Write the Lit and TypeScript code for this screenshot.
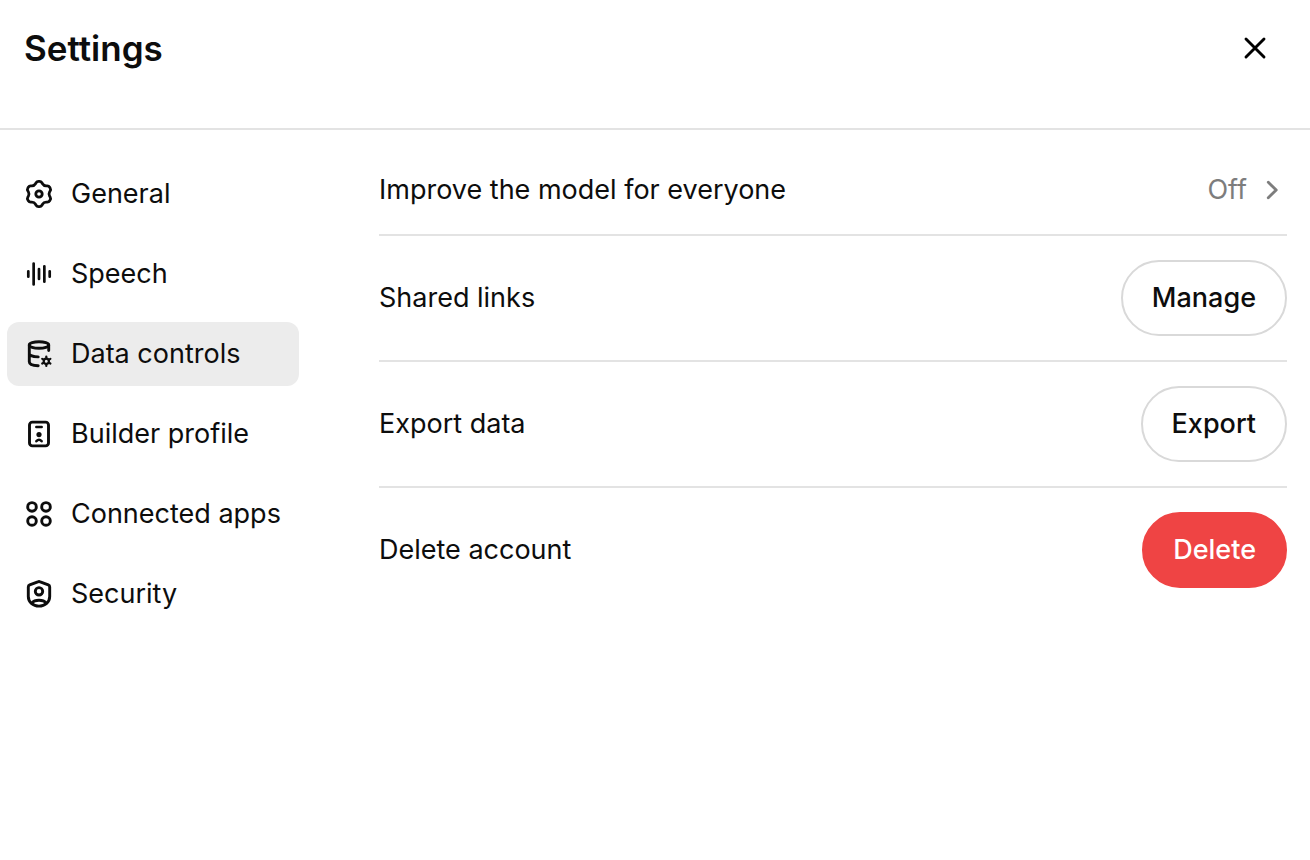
import { LitElement, html, css, svg, type TemplateResult } from "lit";
import { customElement, property, state } from "lit/decorators.js";
import { classMap } from "lit/directives/class-map.js";

// Icons are drawn around the origin of a 32 x 32 view box.
const icons: Record<string, TemplateResult> = {
  general: svg`
    <g transform="scale(1.4) translate(-12 -12)" stroke-width="2">
      <path d="M11.6439 3C10.9352 3 10.2794 3.37508 9.92002 3.98596L9.49644 4.70605C8.96184 5.61487 7.98938 6.17632 6.93501 6.18489L6.09967 6.19168C5.39096 6.19744 4.73823 6.57783 4.38386 7.19161L4.02776 7.80841C3.67339 8.42219 3.67032 9.17767 4.01969 9.7943L4.43151 10.5212C4.95127 11.4386 4.95127 12.5615 4.43151 13.4788L4.01969 14.2057C3.67032 14.8224 3.67339 15.5778 4.02776 16.1916L4.38386 16.8084C4.73823 17.4222 5.39096 17.8026 6.09966 17.8083L6.93502 17.8151C7.98939 17.8237 8.96185 18.3851 9.49645 19.294L9.92002 20.014C10.2794 20.6249 10.9352 21 11.6439 21H12.3561C13.0648 21 13.7206 20.6249 14.08 20.014L14.5035 19.294C15.0381 18.3851 16.0106 17.8237 17.065 17.8151L17.9004 17.8083C18.6091 17.8026 19.2618 17.4222 19.6162 16.8084L19.9723 16.1916C20.3267 15.5778 20.3298 14.8224 19.9804 14.2057L19.5686 13.4788C19.0488 12.5615 19.0488 11.4386 19.5686 10.5212L19.9804 9.7943C20.3298 9.17767 20.3267 8.42219 19.9723 7.80841L19.6162 7.19161C19.2618 6.57783 18.6091 6.19744 17.9004 6.19168L17.065 6.18489C16.0106 6.17632 15.0382 5.61487 14.5036 4.70605L14.08 3.98596C13.7206 3.37508 13.0648 3 12.3561 3H11.6439Z"/>
      <circle cx="12" cy="12" r="2.3"/>
    </g>`,
  speech: svg`<path stroke-width="2.7" d="M-10.7-2.7V2.7M-5.35-10.5V10.5M0-5V5M5.35-7.7V7.7M10.7-2.7V2.7"/>`,
  data: svg`
    <ellipse cx="0" cy="-9" rx="9.7" ry="3.3"/>
    <path d="M9.7-9V-3.4M-9.7-9V7.7C-9.7 10.2-5.8 11.6-.8 11.8M-9.7-.6C-9.7 1.2-5.5 2.7-.8 2.9"/>
    <g transform="translate(7.3 7.2)" stroke-width="2.2">
      <circle r="2.6"/>
      <path d="M0-2.800V-4.700M0 2.800V4.700M2.400-1.400L4.100-2.350M-2.400 1.400L-4.100 2.350M-2.400-1.400L-4.100-2.350M2.400 1.400L4.100 2.350"/>
    </g>`,
  profile: svg`
    <rect x="-9.5" y="-11.9" width="19" height="23.8" rx="2.9"/>
    <path stroke-width="2.5" d="M-2.7-6.9H2.7"/>
    <circle class="solid" cx="0" cy=".6" r="2.6"/>
    <path stroke-width="2.6" d="M-2.6 7.2Q0 4.4 2.6 7.2"/>`,
  apps: svg`
    <circle cx="-7" cy="-7.1" r="4.3"/><circle cx="7" cy="-7.1" r="4.3"/>
    <circle cx="-7" cy="7" r="4.3"/><circle cx="7" cy="7" r="4.3"/>`,
  security: svg`
    <path d="M-1.2-12.2Q0-12.7 1.2-12.2L9.3-9.1Q10.7-8.5 10.7-7V2.5C10.7 8 6 12.1 0 12.1S-10.7 8-10.7 2.5V-7Q-10.7-8.5-9.3-9.1Z"/>
    <circle cx="0" cy="-2.7" r="3.7"/>
    <path d="M-6.7 8.7C-4.5 5.5 4.5 5.5 6.7 8.7"/>`,
  close: svg`<path d="M-9-9L9 9M9-9L-9 9"/>`,
  chevron: svg`<path d="M-2.700-7.700L5.200 0L-2.700 7.700"/>`,
};

@customElement("ui-icon")
export class UiIcon extends LitElement {
  static styles = css`
    :host { display: block; flex: none; width: 32px; height: 32px; }
    svg {
      display: block;
      width: 32px;
      height: 32px;
      fill: none;
      stroke: currentColor;
      stroke-width: 2.9;
      stroke-linecap: round;
      stroke-linejoin: round;
    }
    .solid { fill: currentColor; stroke: none; }
  `;

  @property() name = "";

  render() {
    return html`<svg viewBox="-16 -16 32 32" aria-hidden="true">${icons[this.name]}</svg>`;
  }
}

const sections = [
  { id: "general", label: "General" },
  { id: "speech", label: "Speech" },
  { id: "data", label: "Data controls" },
  { id: "profile", label: "Builder profile" },
  { id: "apps", label: "Connected apps" },
  { id: "security", label: "Security" },
];

const actions = [
  { label: "Shared links", action: "Manage", danger: false },
  { label: "Export data", action: "Export", danger: false },
  { label: "Delete account", action: "Delete", danger: true },
];

@customElement("app-root")
export class AppRoot extends LitElement {
  static styles = css`
    :host {
      display: block;
      min-height: 100vh;
      background: #fff;
      color: #0d0d0d;
      font-family: Inter, "Liberation Sans", sans-serif;
      font-size: 27px;
      line-height: 40px;
    }
    * { box-sizing: border-box; }
    button {
      margin: 0;
      padding: 0;
      border: 0;
      background: none;
      color: inherit;
      font: inherit;
      cursor: pointer;
    }
    .header {
      display: flex;
      align-items: flex-start;
      justify-content: space-between;
      padding: 24px 31px 56px 24px;
      border-bottom: 2px solid #e3e3e3;
    }
    .title { margin: 0; font-size: 35px; line-height: 48px; font-weight: 600; }
    .close { padding: 8px; color: #000; }
    .body {
      display: grid;
      grid-template-columns: 292px minmax(0, 1fr);
      column-gap: 80px;
      padding: 0 23px 0 7px;
    }
    .nav { display: flex; flex-direction: column; gap: 16px; padding-top: 32px; }
    .tab {
      display: flex;
      align-items: center;
      gap: 16px;
      padding: 12px 16px;
      border-radius: 12px;
      text-align: left;
      white-space: nowrap;
    }
    .tab.selected { background: #ececec; }
    .panel { padding-top: 16px; }
    .row {
      display: flex;
      align-items: center;
      justify-content: space-between;
      padding: 24px 0;
      border-bottom: 2px solid #e3e3e3;
    }
    .row:last-child { border-bottom: 0; }
    .value { display: flex; align-items: center; gap: 8px; color: #7d7d7d; }
    .pill {
      padding: 16px 29px;
      border: 2px solid #d9d9d9;
      border-radius: 38px;
      font-weight: 500;
    }
    .pill.danger { border-color: #ef4444; background: #ef4444; color: #fff; }
  `;

  @state() private selected = "data";

  render() {
    return html`
      <header class="header">
        <h1 class="title">Settings</h1>
        <button class="close" aria-label="Close"><ui-icon name="close"></ui-icon></button>
      </header>
      <div class="body">
        <nav class="nav">
          ${sections.map(
            (s) => html`<button
              class=${classMap({ tab: true, selected: s.id === this.selected })}
              @click=${() => (this.selected = s.id)}
            ><ui-icon name=${s.id}></ui-icon><span>${s.label}</span></button>`
          )}
        </nav>
        <main class="panel">
          <div class="row">
            <span id="improve">Improve the model for everyone</span>
            <button class="value" aria-describedby="improve">
              <span>Off</span><ui-icon name="chevron"></ui-icon>
            </button>
          </div>
          ${actions.map(
            (a) => html`<div class="row">
              <span>${a.label}</span>
              <button class=${classMap({ pill: true, danger: a.danger })}>${a.action}</button>
            </div>`
          )}
        </main>
      </div>
    `;
  }
}
